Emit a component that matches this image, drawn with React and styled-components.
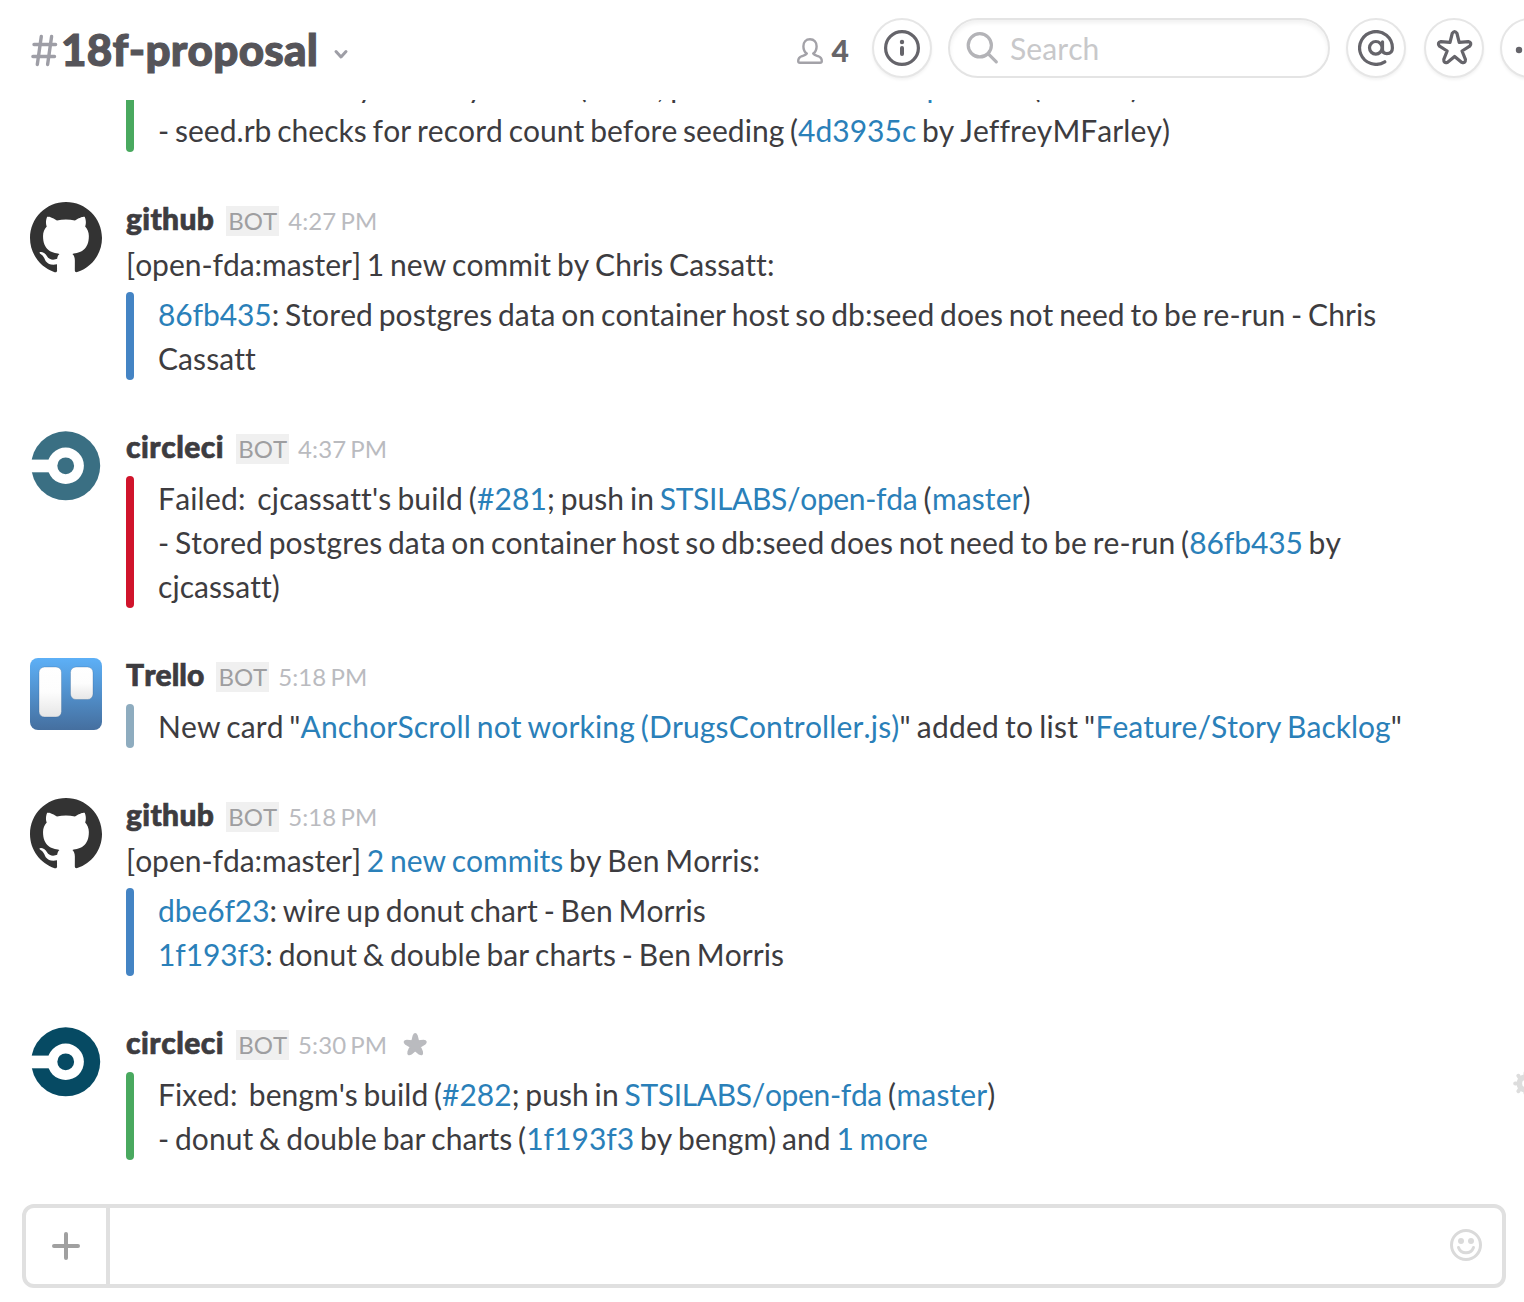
import React from 'react';
import styled, { createGlobalStyle } from 'styled-components';

const GlobalStyle = createGlobalStyle`
  *, *::before, *::after { box-sizing: border-box; }
  html, body { margin: 0; padding: 0; overflow: hidden; background: #fff; }
  body {
    font-family: Lato, "Open Sans", sans-serif;
    font-size: 30px;
    line-height: 44px;
    font-variant-ligatures: none;
    font-kerning: none;
    letter-spacing: 0.07px;
    word-spacing: -2px;
    color: #3d3c40;
  }
`;

const Page = styled.div`
  display: flex;
  flex-direction: column;
  width: 100%;
  height: 100vh;
  overflow: hidden;
`;

const Header = styled.header`
  display: flex;
  align-items: flex-start;
  flex: none;
  height: 100px;
  padding: 18px 0 0 30px;
  overflow: hidden;
`;

const ChannelName = styled.h1`
  display: flex;
  align-items: center;
  flex: 1;
  height: 62px;
  margin: 0;
  font-size: 44px;
  font-weight: 900;
  line-height: 62px;
  color: #555459;
  svg { flex: none; margin-top: 2px; }
`;

const ChannelText = styled.span`
  margin: 0 15px 0 3px;
  letter-spacing: 0.25px;
  -webkit-text-stroke: 1.1px currentColor;
`;

const Members = styled.div`
  display: flex;
  align-items: center;
  gap: 8px;
  height: 65px;
  margin-right: 23px;
  font-weight: 900;
  line-height: 42px;
  color: #666569;
`;

const MemberCount = styled.span`
  margin-top: -2px;
`;

const RoundButton = styled.button`
  display: flex;
  align-items: center;
  justify-content: center;
  flex: none;
  width: 60px;
  height: 60px;
  margin: 0 ${(p) => p.$gap ?? 16}px 0 0;
  padding: 0;
  border: 2px solid #e6e6e6;
  border-radius: 50%;
  background: #fff;
  box-shadow: 0 2px 3px rgba(0, 0, 0, 0.05);
`;

const SearchBox = styled.div`
  display: flex;
  align-items: center;
  flex: none;
  gap: 11px;
  width: 382px;
  height: 60px;
  margin-right: 16px;
  padding: 0 15px;
  border: 2px solid #e4e4e4;
  border-radius: 30px;
  box-shadow: inset 0 3px 4px rgba(0, 0, 0, 0.06);
  color: #c8c8ca;
`;

const Feed = styled.main`
  display: flex;
  flex-direction: column;
  justify-content: flex-end;
  flex: 1;
  min-height: 0;
  gap: 50px;
  padding: 0 0 44px 30px;
  overflow: hidden;
`;

const MessageRow = styled.article`
  display: flex;
  align-items: flex-start;
  flex: none;
`;

const Avatar = styled.div`
  flex: none;
  width: 72px;
  height: ${(p) => (p.$empty ? 0 : 72)}px;
  margin-right: 24px;
  svg { display: block; }
`;

const MessageBody = styled.div`
  flex: none;
  width: 1314px;
`;

const MessageHead = styled.div`
  display: flex;
  align-items: baseline;
  height: 40px;
  line-height: 32px;
`;

const Author = styled.span`
  font-weight: 900;
  letter-spacing: ${(p) => p.$track}px;
  -webkit-text-stroke: 0.7px currentColor;
`;

const BotTag = styled.span`
  height: 30px;
  margin: 0 9px 0 12px;
  padding: 0 2px;
  background: #f0f0f0;
  font-size: 24px;
  line-height: 30px;
  letter-spacing: 0;
  color: #9e9ea0;
`;

const Time = styled.time`
  font-size: 24px;
  color: #babbbf;
`;

const StarSlot = styled.span`
  display: flex;
  align-self: flex-start;
  margin: 6px 0 0 15px;
`;

const Attachment = styled.div`
  display: flex;
  margin-top: ${(p) => (p.$flush ? 0 : 6)}px;
  &::before {
    content: '';
    flex: none;
    width: 8px;
    margin-right: 24px;
    border-radius: 4px;
    background: ${(p) => p.$color};
  }
`;

const Line = styled.div`
  white-space: pre-wrap;
`;

const Tracked = styled.span`
  letter-spacing: ${(p) => p.$track}px;
`;

const Link = styled.a`
  color: #2a80b9;
  letter-spacing: ${(p) => p.$track ?? 0}px;
  text-decoration: none;
`;

const GearSlot = styled.span`
  flex: none;
  margin: 45px -14px 0 73px;
  svg { display: block; }
`;

const Composer = styled.footer`
  display: flex;
  flex: none;
  height: 84px;
  margin: 0 18px 14px 22px;
  border: 4px solid #e0e0e0;
  border-radius: 12px;
`;

const AttachButton = styled.button`
  display: flex;
  align-items: center;
  justify-content: center;
  width: 84px;
  padding: 0;
  border: 0;
  border-right: 4px solid #e0e0e0;
  background: none;
`;

const ComposerField = styled.div`
  display: flex;
  align-items: center;
  justify-content: flex-end;
  flex: 1;
  padding: 0 20px 2px 0;
`;

/* Star with rounded, slightly swollen arms, built around the centre (c, c). */
function starPath(c, outer, inner, spread) {
  const at = (r, a) => {
    const t = (a * Math.PI) / 180;
    return `${(c + r * Math.sin(t)).toFixed(2)} ${(c - r * Math.cos(t)).toFixed(2)}`;
  };
  let d = '';
  for (let i = 0; i < 5; i += 1) {
    const a = i * 72;
    d += `${i ? 'L' : 'M'}${at(outer - 2, a - spread)}Q${at(outer + 1.5, a)} ${at(outer - 2, a + spread)}L${at(inner, a + 36)}`;
  }
  return `${d}Z`;
}

const HashIcon = () => (
  <svg width="28" height="34" viewBox="0 0 28 34" fill="none" stroke="#9e9ea6" strokeWidth="3.400" strokeLinecap="round">
    <path d="M11.300 3.500 7.300 31.500M21.600 3.500l-4 28M4 11.500h21.600M2.900 23.500h21.600" />
  </svg>
);

const ChevronIcon = () => (
  <svg width="16" height="20" viewBox="0 0 16 20" fill="none" stroke="#9e9ea6" strokeWidth="3" strokeLinecap="round" strokeLinejoin="round">
    <path d="m3 11.500 5 5.500 5-5.500" />
  </svg>
);

const PersonIcon = () => (
  <svg width="28" height="28" viewBox="0 0 28 28" fill="none" stroke="#a3a2a8" strokeWidth="2.400" strokeLinejoin="round">
    <path d="M14 2.200c-4.200 0-6.600 3-6.600 7 0 3.300 1.300 6 3.400 7.400-1 1.400-2.800 1.800-4.800 2.500C3.300 20 2.200 21.700 2.200 24c0 1 .8 1.800 1.800 1.800h20c1 0 1.800-.8 1.800-1.800 0-2.300-1.100-4-3.800-4.900-2-.7-3.800-1.100-4.800-2.500 2.100-1.400 3.400-4.100 3.400-7.400 0-4-2.400-7-6.600-7Z" />
  </svg>
);

const InfoIcon = () => (
  <svg width="36" height="36" viewBox="0 0 36 36" fill="none" stroke="#65646a" strokeLinecap="round">
    <circle cx="18" cy="18" r="16.400" strokeWidth="3.200" />
    <path d="M18 18v6" strokeWidth="4" />
    <circle cx="18" cy="12" r="2.200" fill="#65646a" stroke="none" />
  </svg>
);

const SearchIcon = () => (
  <svg width="34" height="34" viewBox="0 0 34 34" fill="none" stroke="#b3b3b7" strokeWidth="3.200" strokeLinecap="round">
    <circle cx="14.800" cy="14.300" r="11.600" />
    <path d="m23.300 22.800 8 8" />
  </svg>
);

const AtIcon = () => (
  <svg width="36" height="36" viewBox="0 0 36 36" fill="none" stroke="#65646a" strokeWidth="3.200" strokeLinecap="round">
    <circle cx="17.800" cy="17.800" r="6.300" />
    <path d="M24.500 11.800v7.800c0 2.600 1.600 4 4.300 4 3.400 0 5.600-2 5.600-5.600A16.400 16.400 0 1 0 26.800 31.800" />
  </svg>
);

const StarIcon = () => (
  <svg width="40" height="40" viewBox="0 0 40 40" fill="none" stroke="#65646a" strokeWidth="3.200" strokeLinejoin="round">
    <path d={starPath(20.6, 17.3, 7.8, 9)} />
  </svg>
);

const SmallStarIcon = () => (
  <svg width="26" height="26" viewBox="0 0 26 26" fill="#babbbf" stroke="#babbbf" strokeWidth="2" strokeLinejoin="round">
    <path d={starPath(13.2, 11.4, 5, 10)} />
  </svg>
);

const MoreIcon = () => (
  <svg width="32" height="12" viewBox="0 0 32 12" fill="#65646a">
    <circle cx="5" cy="8" r="3.200" />
    <circle cx="16" cy="8" r="3.200" />
    <circle cx="27" cy="8" r="3.200" />
  </svg>
);

const GearIcon = () => (
  <svg width="24" height="24" viewBox="0 0 24 24" fill="none" stroke="#dddddd">
    <circle cx="12.500" cy="12.500" r="6.200" strokeWidth="5.600" />
    <path
      d="M12.500 3V2M12.500 21v1M3 12.500H2.200M21 12.500h1M6.300 6.300l-.9-1.500M18.700 18.700l.9 1.500M6.300 18.700l-.9 1.500M18.700 6.300l.9-1.500"
      strokeWidth="4"
      strokeLinecap="round"
    />
  </svg>
);

const PlusIcon = () => (
  <svg width="28" height="28" viewBox="0 0 28 28" stroke="#a0a0a0" strokeWidth="4" strokeLinecap="round">
    <path d="M14 2v24M2 14h24" />
  </svg>
);

const SmileIcon = () => (
  <svg width="32" height="32" viewBox="0 0 32 32" fill="none" stroke="#dadada" strokeWidth="3" strokeLinecap="round">
    <circle cx="16" cy="16" r="14.500" />
    <path d="M8.500 18.500c1.200 3.400 4 5.300 7.500 5.300s6.300-1.900 7.500-5.300" />
    <circle cx="11" cy="12" r="3" fill="#dadada" stroke="none" />
    <circle cx="21" cy="12" r="3" fill="#dadada" stroke="none" />
  </svg>
);

const GithubLogo = () => (
  <svg width="72" height="72" viewBox="0 .297 24 24" fill="#333">
    <path d="M12 .297c-6.63 0-12 5.373-12 12 0 5.303 3.438 9.8 8.205 11.385.6.113.82-.258.82-.577 0-.285-.01-1.04-.015-2.04-3.338.724-4.042-1.61-4.042-1.61C4.422 18.07 3.633 17.7 3.633 17.7c-1.087-.744.084-.729.084-.729 1.205.084 1.838 1.236 1.838 1.236 1.07 1.835 2.809 1.305 3.495.998.108-.776.417-1.305.76-1.605-2.665-.3-5.466-1.332-5.466-5.93 0-1.31.465-2.38 1.235-3.22-.135-.303-.54-1.523.105-3.176 0 0 1.005-.322 3.3 1.23.96-.267 1.98-.399 3-.405 1.02.006 2.04.138 3 .405 2.28-1.552 3.285-1.23 3.285-1.23.645 1.653.24 2.873.12 3.176.765.84 1.23 1.91 1.23 3.22 0 4.61-2.805 5.625-5.475 5.92.42.36.81 1.096.81 2.22 0 1.606-.015 2.896-.015 3.286 0 .315.21.69.825.57C20.565 22.092 24 17.592 24 12.297c0-6.627-5.373-12-12-12" />
  </svg>
);

const CircleLogo = ({ color }) => (
  <svg width="72" height="72" viewBox="0 0 72 72">
    <circle cx="35.700" cy="35.800" r="34.500" fill={color} />
    <circle cx="35.700" cy="35.800" r="18.200" fill="#fff" />
    <path d="M0 29.600h22v12.700H0Z" fill="#fff" />
    <circle cx="35.700" cy="35.800" r="8.400" fill={color} />
  </svg>
);

const TrelloLogo = () => (
  <svg width="72" height="72" viewBox="0 0 72 72">
    <defs>
      <linearGradient id="trello-board" x1="0" y1="0" x2="0" y2="1">
        <stop offset="0" stopColor="#5db0f7" />
        <stop offset="1" stopColor="#456f9f" />
      </linearGradient>
      <linearGradient id="trello-list" x1="0" y1="0" x2="0" y2="1">
        <stop offset="0" stopColor="#fff" />
        <stop offset=".5" stopColor="#fdfdfd" />
        <stop offset="1" stopColor="#e6e6e6" />
      </linearGradient>
    </defs>
    <rect width="72" height="72" rx="8" fill="url(#trello-board)" />
    <g fill="url(#trello-list)" stroke="#2f5f92" strokeOpacity=".3">
      <rect x="9" y="9" width="22.500" height="50" rx="5.500" />
      <rect x="40.500" y="9" width="22.500" height="32.500" rx="5.500" />
    </g>
  </svg>
);

const LOGOS = {
  github: <GithubLogo />,
  circleFaded: <CircleLogo color="#3a6f83" />,
  circle: <CircleLogo color="#064a63" />,
  trello: <TrelloLogo />,
};

const NAME_TRACKING = { github: 0.35, circleci: 0.5, Trello: 0.05 };

const GREEN = '#49a95f';
const BLUE = '#4484c4';

const RepoLink = () => <Link $track={-0.35}>STSILABS/open-fda</Link>;

function Message({ logo, author, time, text, color, starred, children }) {
  return (
    <MessageRow>
      <Avatar $empty={!logo}>{logo && LOGOS[logo]}</Avatar>
      <MessageBody>
        {author && (
          <MessageHead>
            <Author $track={NAME_TRACKING[author]}>{author}</Author>
            <BotTag>BOT</BotTag>
            <Time>{time}</Time>
            {starred && <StarSlot><SmallStarIcon /></StarSlot>}
          </MessageHead>
        )}
        {text && <Line>{text}</Line>}
        <Attachment $color={color} $flush={!author}>
          <div>{children}</div>
        </Attachment>
      </MessageBody>
      {starred && <GearSlot><GearIcon /></GearSlot>}
    </MessageRow>
  );
}

export default function App() {
  return (
    <Page>
      <GlobalStyle />
      <Header>
        <ChannelName>
          <HashIcon />
          <ChannelText>18f-proposal</ChannelText>
          <ChevronIcon />
        </ChannelName>
        <Members><PersonIcon /><MemberCount>4</MemberCount></Members>
        <RoundButton><InfoIcon /></RoundButton>
        <SearchBox><SearchIcon />Search</SearchBox>
        <RoundButton $gap={18}><AtIcon /></RoundButton>
        <RoundButton><StarIcon /></RoundButton>
        <RoundButton $gap={-36}><MoreIcon /></RoundButton>
      </Header>

      <Feed>
        <Message color={GREEN}>
          <Line><Tracked $track={0.08}>Success:  JeffreyMFarley's build (</Tracked><Link>#280</Link>; push in <RepoLink /> (<Link>master</Link>)</Line>
          <Line><Tracked $track={0.04}>- seed.rb checks for record count before seeding (</Tracked><Link>4d3935c</Link> by JeffreyMFarley)</Line>
        </Message>

        <Message
          logo="github"
          author="github"
          time="4:27 PM"
          color={BLUE}
          text={<><Tracked $track={-0.04}>[open-fda:master]</Tracked> 1 new commit by Chris Cassatt:</>}
        >
          <Line><Link $track={-0.1}>86fb435</Link>: Stored postgres data on container host so db:seed does not need to be re-run - Chris Cassatt</Line>
        </Message>

        <Message logo="circleFaded" author="circleci" time="4:37 PM" color="#d0142b">
          <Line><Tracked $track={0.18}>Failed:  cjcassatt's build (</Tracked><Link $track={0.1}>#281</Link>; push in <RepoLink /><Tracked $track={0.5}> (</Tracked><Link $track={0.1}>master</Link>)</Line>
          <Line>- Stored postgres data on container host so db:seed does not need to be re-run (<Link $track={-0.1}>86fb435</Link> by cjcassatt)</Line>
        </Message>

        <Message logo="trello" author="Trello" time="5:18 PM" color="#8eacbf">
          <Line>New card "<Link $track={0.15}>AnchorScroll not working (DrugsController.js)</Link><Tracked $track={0.24}>" added to list "</Tracked><Link>Feature/Story Backlog</Link>"</Line>
        </Message>

        <Message
          logo="github"
          author="github"
          time="5:18 PM"
          color={BLUE}
          text={<><Tracked $track={-0.04}>[open-fda:master]</Tracked> <Link>2 new commits</Link> by Ben Morris:</>}
        >
          <Line><Link $track={-0.1}>dbe6f23</Link>: wire up donut chart - Ben Morris</Line>
          <Line><Link $track={-0.1}>1f193f3</Link>: donut &amp; double bar charts - Ben Morris</Line>
        </Message>

        <Message logo="circle" author="circleci" time="5:30 PM" color={GREEN} starred>
          <Line><Tracked $track={0.03}>Fixed:  bengm's build (</Tracked><Link>#282</Link>; push in <RepoLink /><Tracked $track={0.5}> (</Tracked><Link $track={0.1}>master</Link>)</Line>
          <Line>- donut &amp; double bar charts (<Link>1f193f3</Link> by bengm) and <Link>1 more</Link></Line>
        </Message>
      </Feed>

      <Composer>
        <AttachButton><PlusIcon /></AttachButton>
        <ComposerField><SmileIcon /></ComposerField>
      </Composer>
    </Page>
  );
}
